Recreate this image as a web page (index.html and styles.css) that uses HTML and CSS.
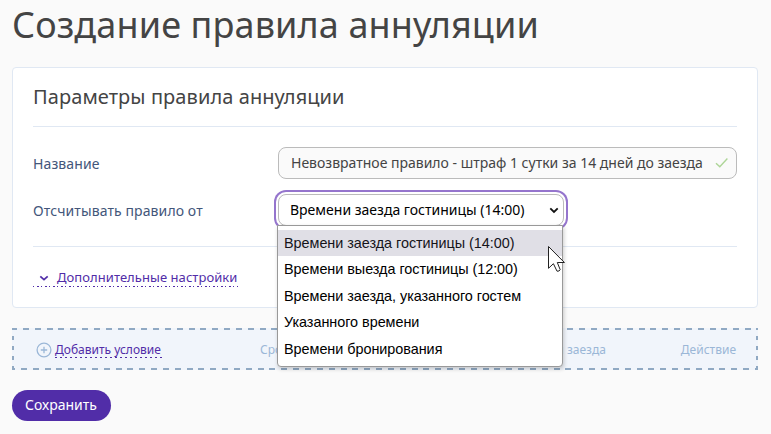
FILE: index.html
```html
<!DOCTYPE html>
<html lang="ru">
<head>
<meta charset="utf-8">
<title>Создание правила аннуляции</title>
<link rel="stylesheet" href="styles.css">
</head>
<body>
<main class="page">
  <h1 class="page-title">Создание правила аннуляции</h1>
  <section class="card">
    <h2 class="card-title">Параметры правила аннуляции</h2>
    <div class="row">
      <span class="label">Название</span>
      <div class="input">
        <span class="input-text">Невозвратное правило - штраф 1 сутки за 14 дней до заезда</span>
        <svg class="check" viewBox="0 0 14 12"><path d="M1 6.2 4.8 9.8 12.4 1.6"/></svg>
      </div>
    </div>
    <div class="row">
      <span class="label">Отсчитывать правило от</span>
      <div class="select">
        <span class="select-text">Времени заезда гостиницы (14:00)</span>
        <svg class="arrow" viewBox="0 0 10 7"><path d="M1.3 1.3 5 5 8.7 1.3"/></svg>
        <ul class="menu">
          <li class="option active">Времени заезда гостиницы (14:00)</li>
          <li class="option">Времени выезда гостиницы (12:00)</li>
          <li class="option">Времени заезда, указанного гостем</li>
          <li class="option">Указанного времени</li>
          <li class="option">Времени бронирования</li>
        </ul>
        <svg class="cursor" viewBox="0 0 19 28"><path d="M1.5 1.5V23.3L6.4 18.7 10 26.2Q12.5 26.5 13.2 24.7L10.3 17.5H17.4Z"/></svg>
      </div>
    </div>
    <div class="more">
      <a class="more-link"><svg class="chevron" viewBox="0 0 10 7"><path d="M1.3 1.3 5 4.7 8.7 1.3"/></svg><span class="more-text">Дополнительные настройки</span></a>
    </div>
  </section>
  <section class="conditions">
    <svg class="plus" viewBox="0 0 16 16"><circle cx="8" cy="8" r="6.9"/><path d="M8 4.8V11.2M4.8 8H11.2"/></svg>
    <a class="add">Добавить условие</a>
    <span class="col term">Срок</span>
    <span class="col arrival">До времени заезда</span>
    <span class="col action">Действие</span>
  </section>
  <button class="save">Сохранить</button>
</main>
</body>
</html>
```
FILE: styles.css
```css
* { box-sizing: border-box; }
body {
  margin: 0;
  background: #fafafa;
  color: #444;
  font-family: "Noto Sans", sans-serif;
  font-size: 14px;
  overflow: hidden;
}
svg { fill: none; display: block; }
.page { padding: 0 13px 0 12px; }
.page-title {
  margin: 0;
  height: 67px;
  font-size: 36px;
  line-height: 50px;
  font-weight: 400;
  letter-spacing: .12px;
  white-space: nowrap;
}
.card {
  height: 241px;
  padding: 0 20px;
  background: #fff;
  border: 1px solid #e0e8f3;
  border-radius: 4px;
}
.card-title {
  margin: 0 0 20px;
  height: 59px;
  border-bottom: 1px solid #e0e8f3;
  font-size: 20px;
  line-height: 58px;
  font-weight: 400;
  letter-spacing: .08px;
  white-space: nowrap;
}
.row { display: flex; height: 32px; margin-bottom: 15px; }
.label { width: 245px; line-height: 33px; letter-spacing: .1px; color: #43567a; white-space: nowrap; }
.input {
  display: flex;
  align-items: center;
  width: 459px;
  padding: 0 7px 2px 12px;
  border: 1px solid #bbb;
  border-radius: 8px;
  background: #fafafa;
}
.input-text { flex: 1; white-space: nowrap; }
.check { width: 14px; height: 12px; margin-top: 2px; stroke: #add597; stroke-width: 1.4; }
.select {
  position: relative;
  display: flex;
  align-items: center;
  width: 286px;
  padding: 0 4px 2px 11px;
  border: 1px solid #bbb;
  border-radius: 8px;
  background: #fff;
  box-shadow: 0 0 0 2px #fff, 0 0 0 4px #9575cd;
  color: #000;
}
.select-text { flex: 1; white-space: nowrap; }
.arrow { width: 10px; height: 7px; margin-top: 2px; stroke: #111; stroke-width: 1.8; }
.menu {
  position: absolute;
  z-index: 2;
  left: -2px;
  top: 30px;
  width: 286px;
  height: 142px;
  margin: 0;
  padding: 4px 0;
  list-style: none;
  background: #fff;
  border: 1px solid #999;
  border-radius: 0 0 4px 4px;
  box-shadow: 1px 2px 4px rgba(0, 0, 0, .2);
  font: 14.4px/26.4px "Liberation Sans", sans-serif;
  letter-spacing: -.03px;
}
.option { padding-left: 6px; height: 26.4px; white-space: nowrap; }
.active { background: #e0dfe6; color: #15141a; }
.cursor {
  position: absolute;
  z-index: 3;
  left: 268px;
  top: 50px;
  width: 19px;
  height: 28px;
  fill: #fff;
  stroke: #222;
  stroke-width: 1;
}
.more { margin-top: 20px; padding-top: 20px; border-top: 1px solid #e0e8f3; }
.more-link {
  display: flex;
  width: 205px;
  align-items: center;
  height: 20px;
  padding-left: 6px;
  background: repeating-linear-gradient(90deg, #512da8 0 1px, transparent 1px 4px, #512da8 4px 6px, transparent 6px 8px) 0 100% / 100% 1px no-repeat;
  color: #512da8;
  font-size: 13px;
  letter-spacing: .06px;
  white-space: nowrap;
}
.more-text { line-height: 18px; }
.chevron { width: 10px; height: 7px; margin: 3px 8px 0 0; stroke: #512da8; stroke-width: 1.7; }
.conditions {
  display: flex;
  align-items: center;
  height: 42px;
  margin-top: 20px;
  padding: 0 22px 0 24px;
  background:
    repeating-linear-gradient(90deg, #90a9c3 0 6px, transparent 6px 11.84px) -1px 0 / 748px 2px no-repeat,
    repeating-linear-gradient(90deg, #90a9c3 0 6px, transparent 6px 11.84px) -3px 100% / 750px 2px no-repeat,
    repeating-linear-gradient(180deg, #90a9c3 0 4px, transparent 4px 10px) 0 -2px / 2px 44px no-repeat,
    repeating-linear-gradient(180deg, #90a9c3 0 4px, transparent 4px 10px) 100% -2px / 2px 44px no-repeat,
    #f1f5fb;
  font-size: 12px;
  white-space: nowrap;
}
.plus { width: 16px; height: 16px; margin: 2px 3px 0 0; stroke: #9bb7d7; stroke-width: 1.3; }
.add {
  width: 107px;
  height: 17px;
  line-height: 18px;
  background: repeating-linear-gradient(90deg, #512da8 0 2px, transparent 2px 5px) 0 100% / 100% 1px no-repeat;
  color: #512da8;
}
.col { color: #9bb7d7; }
.term { margin-left: 98px; }
.arrival { margin-left: auto; margin-right: 75px; }
.save {
  display: block;
  width: 99px;
  height: 31px;
  margin-top: 20px;
  padding: 0 1px 2px 0;
  border: 0;
  border-radius: 16px;
  background: #512da8;
  color: #fff;
  font: 14px "Noto Sans", sans-serif;
}
```
